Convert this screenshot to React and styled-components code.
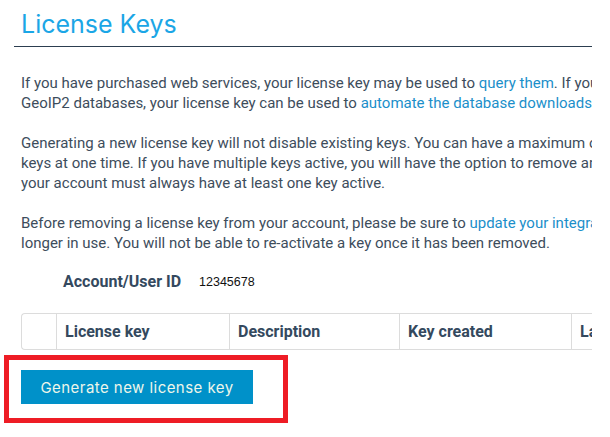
import React from 'react';
import styled, { createGlobalStyle } from 'styled-components';

const GlobalStyle = createGlobalStyle`
  html, body {
    margin: 0;
    padding: 0;
    background: #ffffff;
  }
`;

const Page = styled.div`
  position: relative;
  width: 610px;
  height: 437px;
  overflow: hidden;
  background: #ffffff;
`;

const Frame = styled.div`
  width: 578px;
  margin-left: 14px;
  overflow: hidden;
`;

const Title = styled.h1`
  margin: 0;
  padding: 10px 7px 8px;
  font-family: Inter, 'Open Sans', sans-serif;
  font-weight: 400;
  font-size: 25px;
  line-height: 28px;
  color: #1ba6e6;
  border-bottom: 1px solid #2c3e50;
`;

const Content = styled.div`
  padding: 26px 0 0 7px;
  white-space: nowrap;
  font-family: Roboto, 'Liberation Sans', sans-serif;
  font-size: 15px;
  line-height: 20px;
  color: #3d4d5c;
`;

const Paragraph = styled.p`
  margin: 0 0 20px;
  &:last-of-type {
    margin-bottom: 0;
  }
`;

const Link = styled.a`
  color: #1b8fca;
  text-decoration: none;
`;

const AccountRow = styled.div`
  display: flex;
  align-items: center;
  gap: 18px;
  margin-top: 19px;
  padding-left: 42px;
  height: 20px;
`;

const AccountLabel = styled.span`
  font-size: 16px;
  font-weight: 700;
  color: #34495e;
`;

const AccountValue = styled.span`
  font-family: 'Liberation Sans', Arial, sans-serif;
  font-size: 12.5px;
  color: #111111;
`;

const Table = styled.table`
  margin-top: 21px;
  border-collapse: separate;
  border-spacing: 0;
  table-layout: fixed;
  width: 750px;
`;

const HeadCell = styled.th`
  box-sizing: border-box;
  width: ${(p) => p.$w}px;
  height: 37px;
  padding: 0 8px;
  text-align: left;
  font-size: 16px;
  font-weight: 700;
  color: #34495e;
  border-top: 1px solid #dcdcdc;
  border-bottom: 1px solid #dcdcdc;
  border-left: 1px solid #dcdcdc;
  &:first-child {
    border-radius: 4px 0 0 4px;
  }
`;

const ButtonArea = styled.div`
  padding-top: 20px;
`;

const Button = styled.button`
  width: 232px;
  height: 34px;
  border: none;
  border-radius: 0;
  background: #0091c9;
  color: #eef6ea;
  font-family: Inter, 'Open Sans', sans-serif;
  font-size: 15px;
  letter-spacing: 0.45px;
  cursor: pointer;
`;

const Highlight = styled.div`
  position: absolute;
  left: 4px;
  top: 355px;
  width: 284px;
  height: 68px;
  box-sizing: border-box;
  border: 5px solid #ee1c25;
  pointer-events: none;
`;

const columns = [
  { label: '', w: 35 },
  { label: 'License key', w: 173 },
  { label: 'Description', w: 170 },
  { label: 'Key created', w: 172 },
  { label: 'Last used', w: 200 },
];

export default function App() {
  return (
    <Page>
      <GlobalStyle />
      <Frame>
        <Title>License Keys</Title>
        <Content>
          <Paragraph>
            If you have purchased web services, your license key may be used to{' '}
            <Link href="#">query them</Link>. If you have purchased
            <br />
            GeoIP2 databases, your license key can be used to{' '}
            <Link href="#">automate the database downloads</Link>.
          </Paragraph>
          <Paragraph>
            Generating a new license key will not disable existing keys. You can have a maximum of 25 license
            <br />
            keys at one time. If you have multiple keys active, you will have the option to remove any of them; however,
            <br />
            your account must always have at least one key active.
          </Paragraph>
          <Paragraph>
            Before removing a license key from your account, please be sure to{' '}
            <Link href="#">update your integrations</Link> so that the key is no
            <br />
            longer in use. You will not be able to re-activate a key once it has been removed.
          </Paragraph>
          <AccountRow>
            <AccountLabel>Account/User ID</AccountLabel>
            <AccountValue>12345678</AccountValue>
          </AccountRow>
          <Table>
            <thead>
              <tr>
                {columns.map((c, i) => (
                  <HeadCell key={i} $w={c.w}>
                    {c.label}
                  </HeadCell>
                ))}
              </tr>
            </thead>
          </Table>
          <ButtonArea>
            <Button>Generate new license key</Button>
          </ButtonArea>
        </Content>
      </Frame>
      <Highlight />
    </Page>
  );
}
